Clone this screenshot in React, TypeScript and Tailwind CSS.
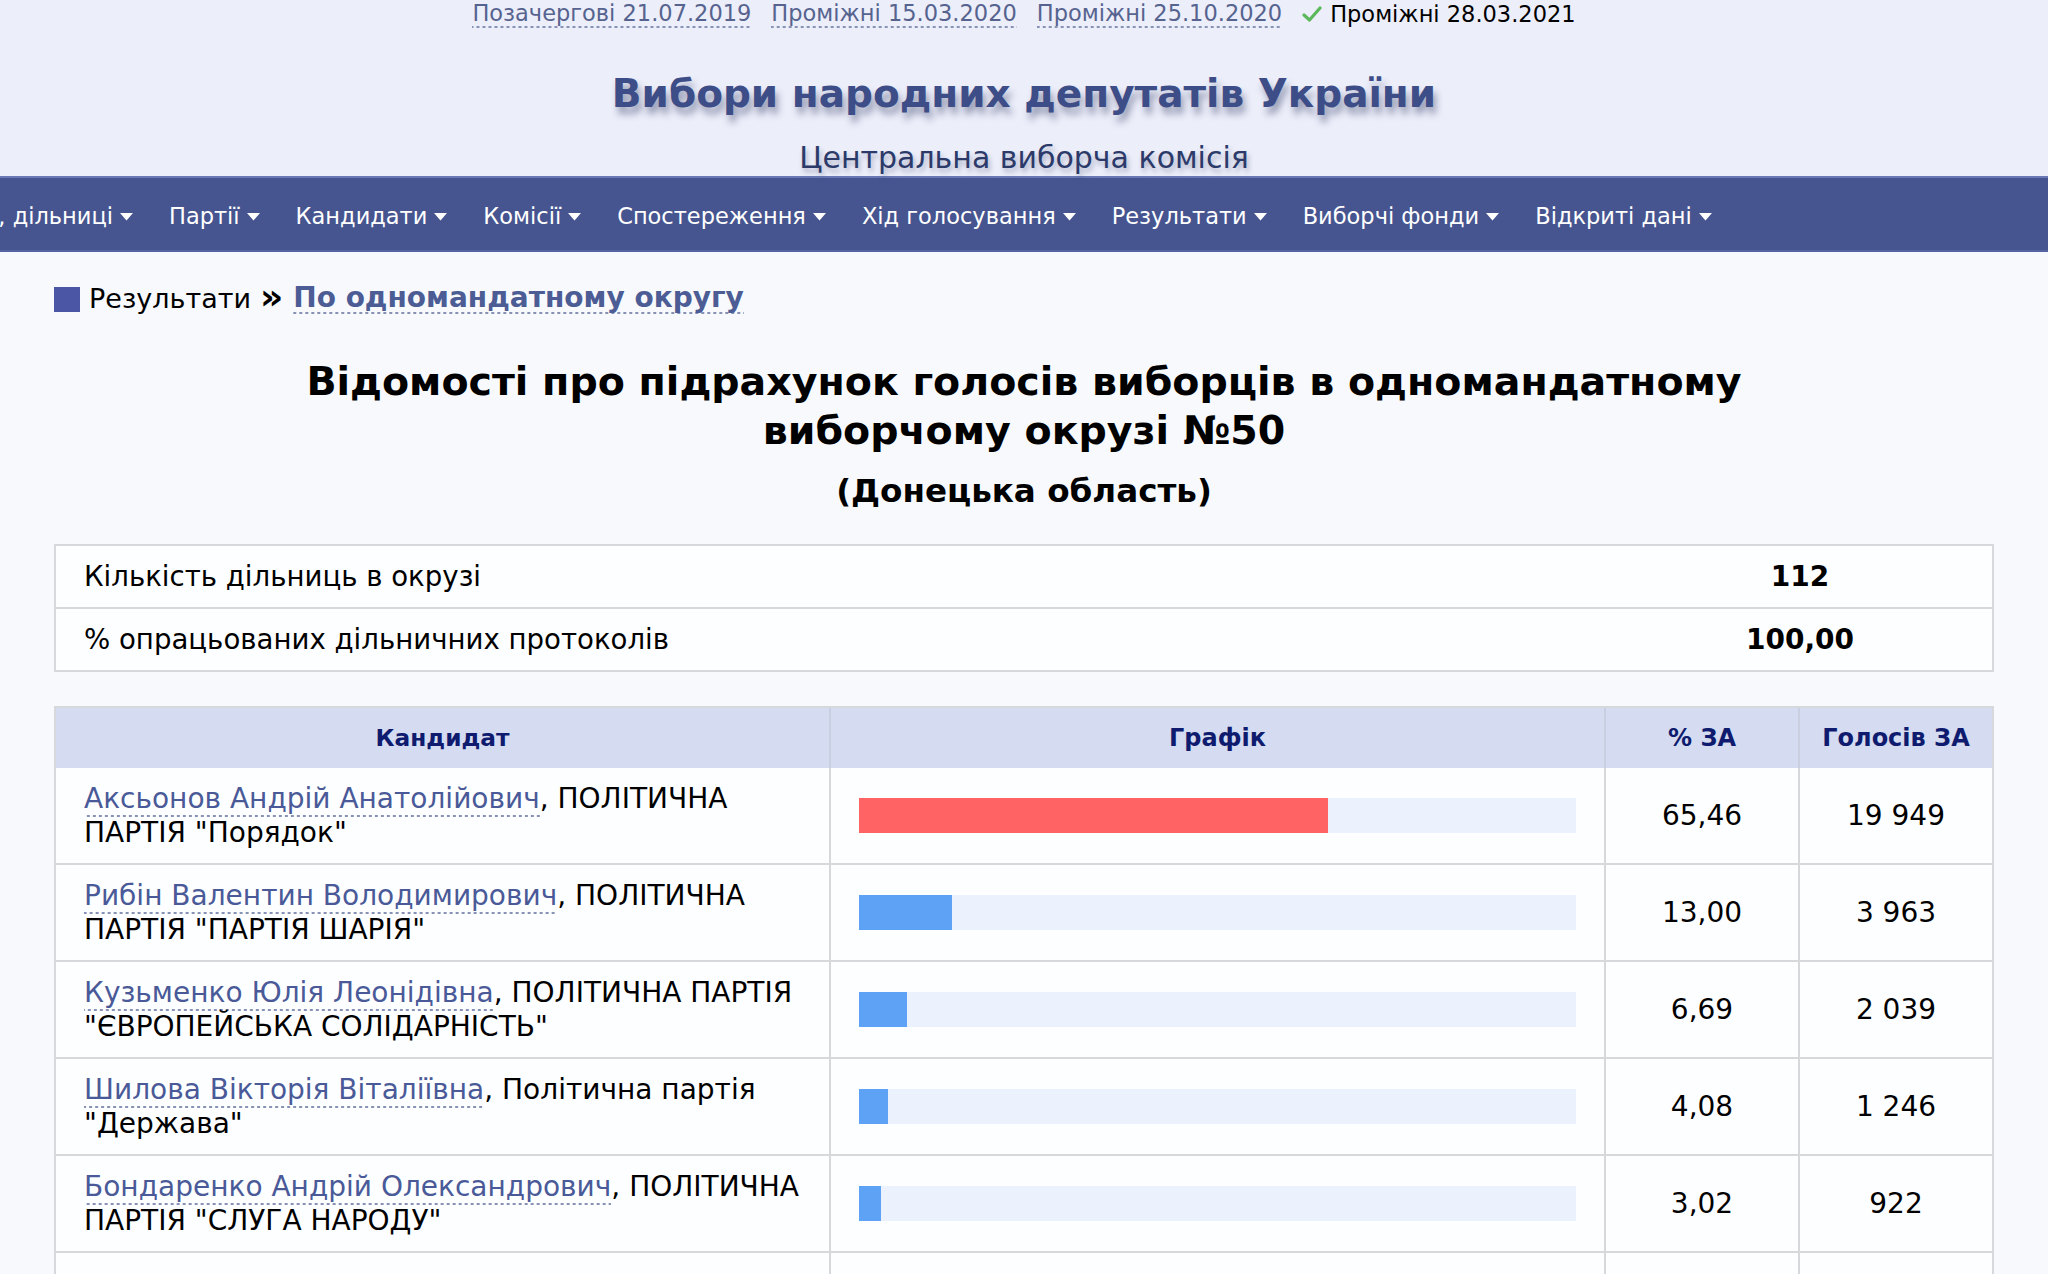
import React from "react";

const dashed =
  "bg-[linear-gradient(to_right,#8892b4_55%,transparent_55%)] bg-[length:6px_2px] bg-repeat-x bg-bottom pb-[2px]";

const navItems = [
  "Округи, дільниці",
  "Партії",
  "Кандидати",
  "Комісії",
  "Спостереження",
  "Хід голосування",
  "Результати",
  "Виборчі фонди",
  "Відкриті дані",
];

type Cand = {
  name: string;
  rest1: string;
  rest2: string;
  pct: number;
  pctText: string;
  votes: string;
  color: string;
};

const candidates: Cand[] = [
  {
    name: "Аксьонов Андрій Анатолійович",
    rest1: ", ПОЛІТИЧНА",
    rest2: "ПАРТІЯ \"Порядок\"",
    pct: 65.46,
    pctText: "65,46",
    votes: "19 949",
    color: "#ff6363",
  },
  {
    name: "Рибін Валентин Володимирович",
    rest1: ", ПОЛІТИЧНА",
    rest2: "ПАРТІЯ \"ПАРТІЯ ШАРІЯ\"",
    pct: 13.0,
    pctText: "13,00",
    votes: "3 963",
    color: "#5ea2f6",
  },
  {
    name: "Кузьменко Юлія Леонідівна",
    rest1: ", ПОЛІТИЧНА ПАРТІЯ",
    rest2: "\"ЄВРОПЕЙСЬКА СОЛІДАРНІСТЬ\"",
    pct: 6.69,
    pctText: "6,69",
    votes: "2 039",
    color: "#5ea2f6",
  },
  {
    name: "Шилова Вікторія Віталіївна",
    rest1: ", Політична партія",
    rest2: "\"Держава\"",
    pct: 4.08,
    pctText: "4,08",
    votes: "1 246",
    color: "#5ea2f6",
  },
  {
    name: "Бондаренко Андрій Олександрович",
    rest1: ", ПОЛІТИЧНА",
    rest2: "ПАРТІЯ \"СЛУГА НАРОДУ\"",
    pct: 3.02,
    pctText: "3,02",
    votes: "922",
    color: "#5ea2f6",
  },
];

function Caret() {
  return (
    <svg width="13" height="8" viewBox="0 0 13 8" className="shrink-0">
      <polygon points="0,0 13,0 6.5,7.5" fill="#ffffff" />
    </svg>
  );
}

function Check() {
  return (
    <svg width="20" height="18" viewBox="0 0 20 18" className="shrink-0">
      <path
        d="M2 10 L7.5 15 L18 3"
        fill="none"
        stroke="#5cb85c"
        strokeWidth="3.2"
        strokeLinecap="round"
        strokeLinejoin="round"
      />
    </svg>
  );
}

export default function App() {
  return (
    <div className="min-h-screen bg-[#f7f9fc] font-['DejaVu_Sans',sans-serif] text-black">
      {/* Header */}
      <div className="bg-[#eceefa] flex flex-col items-center">
        <div className="h-[28px] flex items-center justify-center gap-[20px] text-[22.5px] leading-[26px] text-[#56638f]">
          <span className={dashed}>Позачергові 21.07.2019</span>
          <span className={dashed}>Проміжні 15.03.2020</span>
          <span className={dashed}>Проміжні 25.10.2020</span>
          <span className="flex items-center gap-[8px] text-black">
            <Check />
            <span>Проміжні 28.03.2021</span>
          </span>
        </div>
        <div className="mt-[42px] h-[48px] leading-[48px] text-[39px] font-bold text-[#3d4d87] [text-shadow:3px_7px_7px_rgba(50,60,100,0.45)]">
          Вибори народних депутатів України
        </div>
        <div className="mt-[22px] h-[36px] leading-[36px] text-[30px] text-[#2c3a6a] [text-shadow:2px_4px_5px_rgba(50,60,100,0.35)]">
          Центральна виборча комісія
        </div>
      </div>

      {/* Nav */}
      <div className="h-[76px] bg-[#46558f] border-t-2 border-t-[#6a79b6] border-b-2 border-b-[#5464a2] overflow-hidden flex items-center pt-[5px]">
        <div className="flex items-center gap-[36px] whitespace-nowrap text-[22.5px] text-white ml-[-87px]">
          {navItems.map((n) => (
            <div key={n} className="flex items-center gap-[7px]">
              <span>{n}</span>
              <Caret />
            </div>
          ))}
        </div>
      </div>

      {/* Breadcrumb */}
      <div className="mt-[33px] h-[28px] mx-[54px] flex items-center leading-[28px] whitespace-nowrap">
        <span className="w-[26px] h-[25px] bg-[#4b57a5] shrink-0" />
        <span className="ml-[9px] text-[27px]">Результати</span>
        <span className="ml-[9px] font-bold text-[36px] leading-[28px] pb-[4px]">»</span>
        <span className={"ml-[10px] text-[28px] font-bold text-[#4c5c94] " + dashed}>
          По одномандатному округу
        </span>
      </div>

      {/* Heading */}
      <div className="mt-[44px] text-center font-bold">
        <div className="text-[39.5px] leading-[49px]">
          Відомості про підрахунок голосів виборців в одномандатному
          <br />
          виборчому окрузі №50
        </div>
        <div className="mt-[16px] text-[32.6px] leading-[40px]">(Донецька область)</div>
      </div>

      {/* Stats table */}
      <div className="mt-[33px] mx-[54px] border-2 border-[#d6d8dc] bg-[#fdfeff] text-[27.6px]">
        <div className="grid grid-cols-[1fr_384px] h-[61px] items-center border-b-2 border-[#d6d8dc] box-content">
          <div className="pl-[28px]">Кількість дільниць в окрузі</div>
          <div className="text-center font-bold text-[28px]">112</div>
        </div>
        <div className="grid grid-cols-[1fr_384px] h-[61px] items-center">
          <div className="pl-[28px]">% опрацьованих дільничних протоколів</div>
          <div className="text-center font-bold text-[28px]">100,00</div>
        </div>
      </div>

      {/* Results table */}
      <div className="mt-[34px] mx-[54px] border-2 border-b-0 border-[#d6d8dc] bg-[#fdfeff]">
        <div className="grid grid-cols-[775px_775px_194px_1fr] h-[60px] bg-[#d5dcf1] text-[24px] font-bold text-[#0f1b6e]">
          <div className="flex items-center justify-center border-r-2 border-[#c9cfe0] text-[23.3px]">Кандидат</div>
          <div className="flex items-center justify-center border-r-2 border-[#c9cfe0]">Графік</div>
          <div className="flex items-center justify-center border-r-2 border-[#c9cfe0]">% ЗА</div>
          <div className="flex items-center justify-center">Голосів ЗА</div>
        </div>
        {candidates.map((c) => (
          <div
            key={c.name}
            className="grid grid-cols-[775px_775px_194px_1fr] h-[97px] border-b-2 border-[#d6d8dc] text-[28px] leading-[34px]"
          >
            <div className="flex flex-col justify-center px-[28px] border-r-2 border-[#d6d8dc] whitespace-nowrap">
              <div>
                <span className={"text-[#4a5a98] " + dashed}>{c.name}</span>
                {c.rest1}
              </div>
              <div>{c.rest2}</div>
            </div>
            <div className="flex items-center px-[28px] border-r-2 border-[#d6d8dc]">
              <div className="h-[35px] w-full bg-[#ecf2fd]">
                <div className="h-full" style={{ width: `${c.pct}%`, backgroundColor: c.color }} />
              </div>
            </div>
            <div className="flex items-center justify-center border-r-2 border-[#d6d8dc]">{c.pctText}</div>
            <div className="flex items-center justify-center">{c.votes}</div>
          </div>
        ))}
        <div className="grid grid-cols-[775px_775px_194px_1fr] h-[97px] text-[28px]">
          <div className="border-r-2 border-[#d6d8dc]" />
          <div className="border-r-2 border-[#d6d8dc]" />
          <div className="border-r-2 border-[#d6d8dc]" />
          <div />
        </div>
      </div>
    </div>
  );
}
